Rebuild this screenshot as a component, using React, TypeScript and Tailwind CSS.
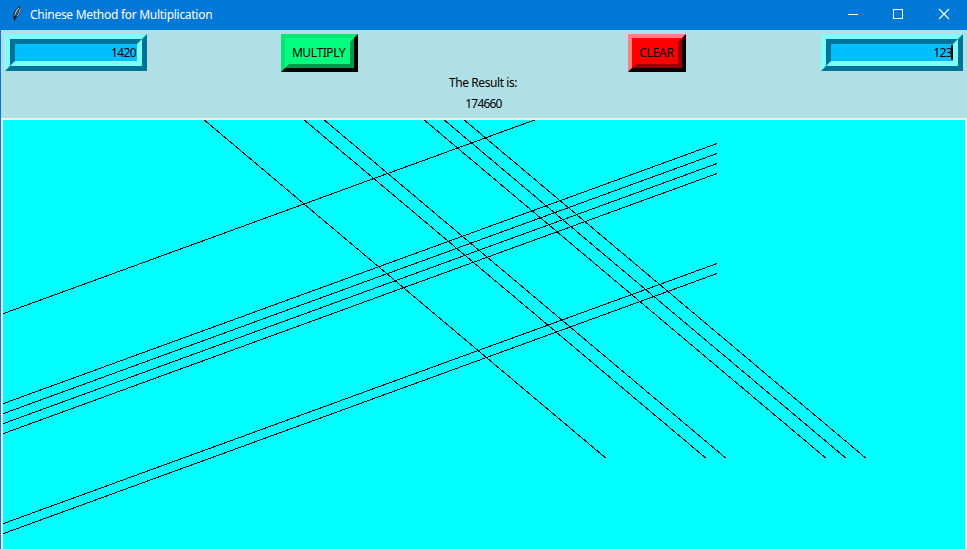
import React from "react";

const steepStarts = [201, 301, 321, 421, 441, 461];
const shallowStarts = [193, 283, 293, 303, 313, 403, 413];

function Feather() {
  return (
    <svg width="12" height="18" viewBox="0 0 12 18" className="shrink-0">
      <path d="M3 14.5C1.5 10 3 4 8.5 1.2C10.8 4 9.5 9.5 4.5 13.5Z" fill="#15202b" />
      <path d="M3.5 11C3.5 7 5.5 4 8.2 2.2C7.8 5 6.6 8 4.6 11.5Z" fill="#a9d4f2" />
      <path d="M9 3.5C9 6.5 8 9 6 11.4" stroke="#b4c4d0" strokeWidth="1" fill="none" />
      <path d="M7.6 4C5.6 8 4 11 3.3 16" stroke="#0b1118" strokeWidth="0.9" fill="none" />
    </svg>
  );
}

function Entry({ value, focused = false }: { value: string; focused?: boolean }) {
  return (
    <div className="h-[37px] w-[142px] border-[5px] border-t-[#80ffff] border-r-[#007399] border-b-[#007399] border-l-[#80ffff]">
      <div className="h-full border-[5px] border-t-[#007399] border-r-[#80ffff] border-b-[#80ffff] border-l-[#007399] bg-[#00bfff]">
        <div className="flex h-[17px] items-center justify-end">
          <span className={"leading-[17px] tracking-[-0.6px] " + (focused ? "-mr-px" : "mr-px")}>{value}</span>
          {focused && <span className="h-[15px] w-[2px] bg-black" />}
        </div>
      </div>
    </div>
  );
}

export default function App() {
  return (
    <div className="flex h-[549px] w-[967px] flex-col overflow-hidden bg-[#b0e0e6] font-['Noto_Sans','Open_Sans',sans-serif] text-[12px] text-black">
      <header className="flex h-[30px] shrink-0 items-center bg-[#0078d7] pl-[10px] text-white">
        <div className="flex h-full w-5 items-start pt-[5px] pl-px">
          <Feather />
        </div>
        <h1 className="tracking-[-0.28px] whitespace-nowrap">Chinese Method for Multiplication</h1>
        <div className="ml-auto flex h-full">
          <svg width="137" height="30" viewBox="0 0 137 30" fill="none" stroke="white">
            <path d="M18 14.5H28" shapeRendering="crispEdges" />
            <path d="M63.5 9.5H72.5V18.5H63.5Z" shapeRendering="crispEdges" />
            <path d="M109 9L119 19M119 9L109 19" strokeWidth="1.1" />
          </svg>
        </div>
      </header>
      <div className="flex min-h-0 flex-1 flex-col border-l border-[#0078d7]">
        <section className="flex h-[88px] shrink-0 flex-col pt-1 pl-1">
          <div className="flex h-[38px] items-start">
            <Entry value="1420" />
            <button className="ml-[134px] h-[38px] w-[77px] border-4 border-t-[#00e673] border-r-black border-b-black border-l-[#00e673]">
              <span className="flex h-full items-center justify-center border-4 border-t-[#00ff7f] border-r-[#00994c] border-b-[#00994c] border-l-[#00ff7f] bg-[#00ff7f] pr-[2px] whitespace-nowrap tracking-[-0.4px]">
                MULTIPLY
              </span>
            </button>
            <button className="ml-[270px] h-[38px] w-[58px] border-4 border-t-[#ff8080] border-r-black border-b-black border-l-[#ff8080]">
              <span className="flex h-full items-center justify-center border-4 border-t-[#ff0000] border-r-[#990000] border-b-[#990000] border-l-[#ff0000] bg-[#ff0000] pr-px whitespace-nowrap tracking-[-0.25px]">
                CLEAR
              </span>
            </button>
            <div className="ml-[135px]">
              <Entry value="123" focused />
            </div>
          </div>
          <div className="flex flex-col items-center pr-[6px] leading-[21px]">
            <p className="tracking-[-0.42px]">The Result is:</p>
            <p className="pl-px tracking-[-0.8px]">174660</p>
          </div>
        </section>
        <main className="min-h-0 flex-1 border-2 border-b-0 border-[#f0f0f0] bg-[#00ffff]">
          <svg width="962" height="429" viewBox="0 0 962 429" className="block" stroke="black" strokeWidth="1" shapeRendering="crispEdges">
            {steepStarts.map((x) => (
              <line key={x} x1={x + 0.3} y1="0" x2={x + 401.7} y2="338" />
            ))}
            {shallowStarts.map((y) => (
              <line key={y} x1="0" y1={y + 0.7} x2="714" y2={y - 259.5} />
            ))}
          </svg>
        </main>
      </div>
    </div>
  );
}
